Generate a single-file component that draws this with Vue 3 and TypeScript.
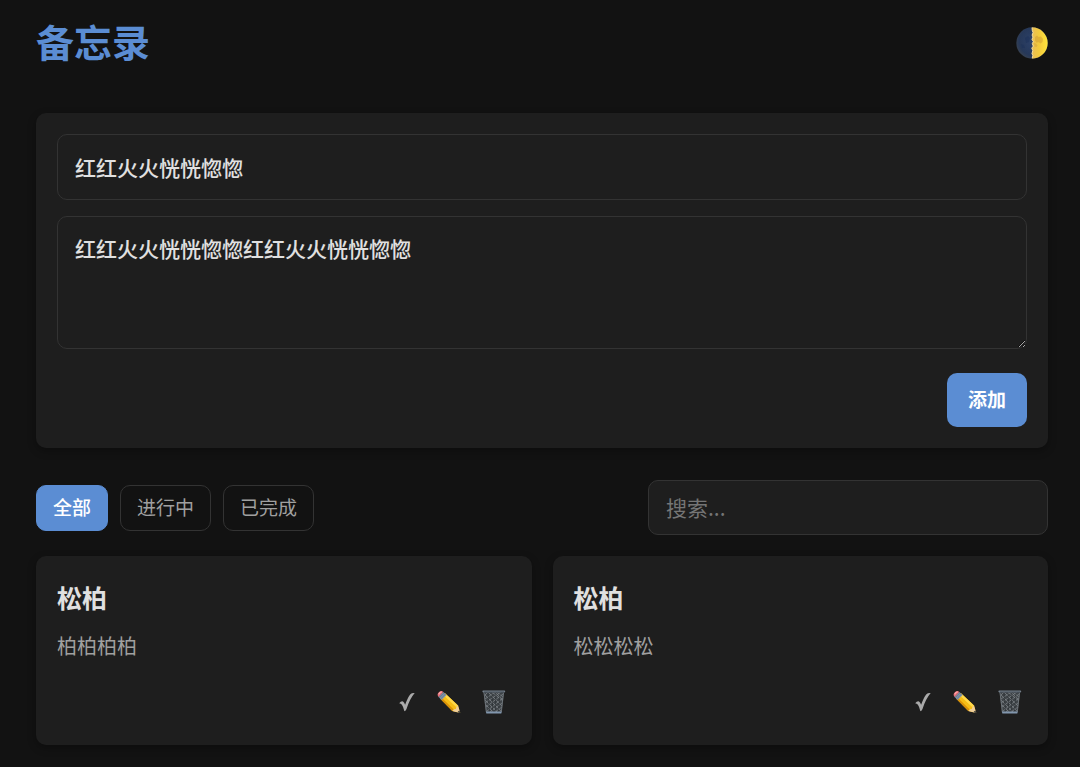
<script setup lang="ts">
import { computed, ref } from 'vue'

interface Memo {
  id: number
  title: string
  content: string
  done: boolean
}

type Filter = 'all' | 'active' | 'done'

const filters: { key: Filter; label: string }[] = [
  { key: 'all', label: '全部' },
  { key: 'active', label: '进行中' },
  { key: 'done', label: '已完成' },
]

const title = ref('红红火火恍恍惚惚')
const content = ref('红红火火恍恍惚惚红红火火恍恍惚惚')
const keyword = ref('')
const current = ref<Filter>('all')
const memos = ref<Memo[]>([
  { id: 1, title: '松柏', content: '柏柏柏柏', done: false },
  { id: 2, title: '松柏', content: '松松松松', done: false },
])

const visible = computed(() =>
  memos.value.filter(
    (m) =>
      (current.value === 'all' || (current.value === 'done') === m.done) &&
      (m.title + m.content).includes(keyword.value),
  ),
)

function add() {
  if (!title.value.trim()) return
  memos.value.unshift({ id: Date.now(), title: title.value, content: content.value, done: false })
  title.value = ''
  content.value = ''
}

function edit(memo: Memo) {
  title.value = memo.title
  content.value = memo.content
  remove(memo.id)
}

function remove(id: number) {
  memos.value = memos.value.filter((m) => m.id !== id)
}
</script>

<template>
  <main class="page">
    <header class="header">
      <h1>备忘录</h1>
      <button class="theme" type="button" aria-label="切换主题">
        <svg viewBox="0 0 32 32" width="32" height="32" aria-hidden="true">
          <defs>
            <linearGradient id="moonLit" x1="0" x2="1" y1="0" y2="0">
              <stop offset="0" stop-color="#e8bd58" />
              <stop offset="0.45" stop-color="#f2c93c" />
              <stop offset="1" stop-color="#ffe43c" />
            </linearGradient>
            <radialGradient id="moonDark" cx="0.55" cy="0.45" r="0.6">
              <stop offset="0" stop-color="#2d426b" />
              <stop offset="0.75" stop-color="#263859" />
              <stop offset="1" stop-color="#39424f" />
            </radialGradient>
          </defs>
          <circle cx="16" cy="16" r="15.7" fill="url(#moonDark)" />
          <path d="M16 .3A15.7 15.7 0 0 1 16 31.700l.8-3-.9-2 .8-3-1-2.500 1.500-2-1-2.500 1-2-1.300-2.500 1-2-.9-2.500 1-2-.8-2z" fill="url(#moonLit)" />
          <path d="M16 .6l.3 3 .8 2-1 2.500.9 2-1 2.200 1.300 2.300-1 2 1 2.500-1.500 2 1 2.500-.8 3 .9 2-.7 2.500" fill="none" stroke="#f5dda0" stroke-width="1" />
          <path d="M19 10l2-1.500 1.500 1.500 2.500-.5 2 2.500-.5 3-2 1.500-2-1.500-2 .8-1.500-2.300z" fill="#c9952e" opacity=".45" />
          <path d="M18 16l2 .5 1.500 2-1 1.500-2-.5z" fill="#c9952e" opacity=".35" />
          <path d="M9 11l3-2 2 2-1 4-3 1zM5 17l3 1 1 3-3 0z" fill="#1c2f57" opacity=".5" />
        </svg>
      </button>
    </header>

    <form class="panel composer" @submit.prevent="add">
      <input v-model="title" class="field" type="text" aria-label="标题" />
      <textarea v-model="content" class="field area" aria-label="内容"></textarea>
      <button class="add" type="submit">添加</button>
    </form>

    <div class="toolbar">
      <div class="filters">
        <button
          v-for="f in filters"
          :key="f.key"
          type="button"
          class="filter"
          :class="{ active: current === f.key }"
          @click="current = f.key"
        >{{ f.label }}</button>
      </div>
      <input v-model="keyword" class="field search" type="text" placeholder="搜索..." aria-label="搜索" />
    </div>

    <section class="grid">
      <article v-for="memo in visible" :key="memo.id" class="panel card">
        <h2>{{ memo.title }}</h2>
        <p>{{ memo.content }}</p>
        <div class="actions">
          <button type="button" aria-label="完成" @click="memo.done = !memo.done">
            <svg viewBox="0 0 17 20" width="17" height="20" aria-hidden="true">
              <path d="M.2 11.200Q2.200 8.800 4 9.500Q5.300 10.200 6.100 12.800Q8.800 5.200 11.400 2.200Q12.700.8 15.700 1Q10.600 7 7.500 17Q6.900 18.800 5.400 19.200Q4.300 14.600 2.900 12.700Q1.900 11.300.2 11.200z" fill="#aaaaaa" />
            </svg>
          </button>
          <button type="button" aria-label="编辑" @click="edit(memo)">
            <svg viewBox="0 0 24 24" width="24" height="24" aria-hidden="true">
              <path d="M8 3.300L21 15.600 23.200 23 15.300 20.900 3 8.500z" fill="#f6bd16" />
              <path d="M8 3.300L21 15.600 19.400 17.200 6.400 4.900z" fill="#ffd84a" />
              <path d="M4.200 7.200L3 8.500 15.300 20.900 16.700 19.400z" fill="#d99008" />
              <path d="M21 15.600L23.200 23 15.300 20.900 17 19.300 18.800 18.900 19.300 17.200z" fill="#f0cf9a" />
              <path d="M22.400 20.300L23.400 23.200 20.300 22.300z" fill="#383838" />
              <path d="M6.300 1.900L9.600 5 4.700 10.100 1.500 6.900z" fill="#8194aa" />
              <path d="M7.300 2.800L2.400 7.800M8.500 4L3.600 9" stroke="#536985" stroke-width=".6" />
              <path d="M1.500 6.900Q-.2 4.900 1.400 2.700Q3.900-.4 6.300 1.900z" fill="#e9747e" />
              <path d="M1.800 4.200Q2.700 2 4.700 1.900" fill="none" stroke="#ffa6a8" stroke-width="1.200" />
            </svg>
          </button>
          <button type="button" aria-label="删除" @click="remove(memo.id)">
            <svg viewBox="0 0 24 24" width="24" height="24" aria-hidden="true">
              <path d="M1.500 1.500H22L19.500 23H4z" fill="#3f4448" />
              <path d="M3 5l3-3 14 14M3 9l10-7 8 8M3 13L19 2M4 17L21 4M5 21L21 8M8 22L20 13M13 22l7-5M3 5l16 16M3 10l12 12M4 15l7 7M10 2l11 9M15 2l6 5" fill="none" stroke="#82888d" stroke-width=".7" />
              <path d="M6 3.500l1.500 18M10 3.500l.7 18M14 3.500l-.7 18M18 3.500l-1.500 18" stroke="#252a2e" stroke-width=".6" />
              <path d="M2 2.500L4.400 22M21.600 2.500L19.300 22" stroke="#70777d" stroke-width=".9" />
              <rect x=".4" y=".4" width="22.800" height="2" rx=".8" fill="#737e89" />
              <path d="M2 2.100H22" stroke="#313840" stroke-width=".8" />
              <path d="M4 21.600H19.700L19.300 23.400H4.300z" fill="#8196ad" />
            </svg>
          </button>
        </div>
      </article>
    </section>
  </main>
</template>

<style>
body {
  margin: 0;
  background: #121212;
}
</style>

<style scoped>
.page {
  box-sizing: border-box;
  padding: 16px 32px 22px 36px;
  font-family: "Noto Sans CJK SC", sans-serif;
  color: #e0e0e0;
}

button,
input,
textarea {
  box-sizing: border-box;
  margin: 0;
  font-family: inherit;
}

button {
  cursor: pointer;
}

.header {
  display: flex;
  align-items: center;
  justify-content: space-between;
  margin-bottom: 43px;
}

h1 {
  margin: 0;
  padding-bottom: 4px;
  font-size: 38px;
  line-height: 50px;
  font-weight: 700;
  color: #5b8dd3;
}

.theme,
.actions button {
  display: flex;
  padding: 0;
  border: 0;
  background: none;
}

.panel {
  padding: 21px;
  border-radius: 10px;
  background: #1e1e1e;
  box-shadow: 0 3px 8px rgba(0, 0, 0, 0.3);
}

.composer {
  display: flex;
  flex-direction: column;
}

.field {
  width: 100%;
  padding: 16px 17px;
  border: 1px solid #333333;
  border-radius: 10px;
  outline: none;
  background: #1e1e1e;
  color: #e0e0e0;
  font-size: 21px;
  line-height: 32px;
  font-weight: 500;
}

.composer .field {
  margin-bottom: 16px;
}

.composer .area {
  display: block;
  height: 133px;
  padding-top: 15px;
  margin-bottom: 24px;
  resize: vertical;
}

.add {
  align-self: flex-end;
  padding: 11px 21px 13px;
  border: 0;
  border-radius: 10px;
  background: #5b8dd3;
  color: #ffffff;
  font-size: 19px;
  line-height: 30px;
  font-weight: 700;
}

.toolbar {
  display: flex;
  align-items: center;
  justify-content: space-between;
  margin: 32px 0 21px;
}

.filters {
  display: flex;
  gap: 12px;
}

.filter {
  padding: 7px 16px 9px;
  border: 1px solid #333333;
  border-radius: 10px;
  background: transparent;
  color: #a0a0a0;
  font-size: 19px;
  line-height: 28px;
}

.filter.active {
  border-color: #5b8dd3;
  background: #5b8dd3;
  color: #ffffff;
  font-weight: 500;
}

.search {
  width: 400px;
  padding: 10px 17px 11px;
  font-weight: 400;
}

.search::placeholder {
  color: #757575;
}

.grid {
  display: grid;
  grid-template-columns: repeat(2, 1fr);
  gap: 21px;
}

h2 {
  margin: 0 0 12px;
  font-size: 25px;
  line-height: 40px;
  font-weight: 700;
}

p {
  margin: 0 0 24px;
  font-size: 20px;
  line-height: 34px;
  color: #a0a0a0;
}

.actions {
  display: flex;
  align-items: center;
  justify-content: flex-end;
  gap: 21px;
  padding: 3px 5px 10px 0;
}
</style>
